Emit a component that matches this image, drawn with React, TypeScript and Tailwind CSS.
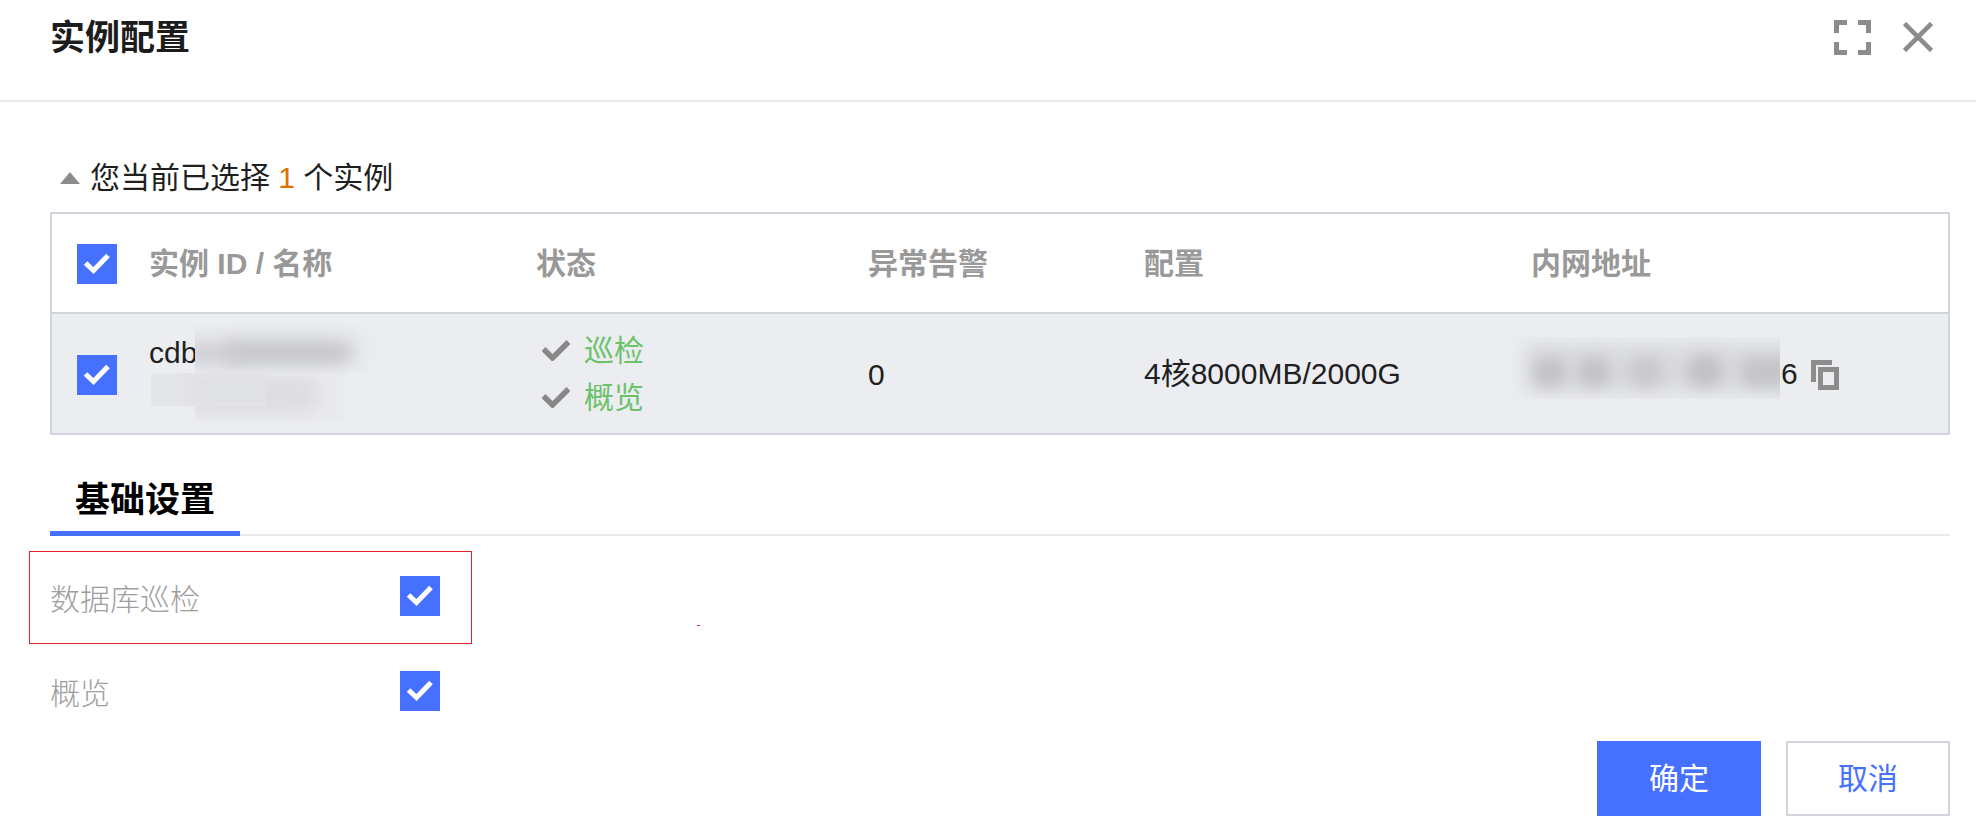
const FONT = "font-['Liberation_Sans','Noto_Sans_CJK_SC',sans-serif]";

function Checkbox() {
  return (
    <span className="block h-10 w-10 shrink-0 bg-[#4670ff]">
      <svg width="40" height="40" viewBox="0 0 40 40" fill="none">
        <path d="M8.5 19 L16.5 26.5 L31 11.5" stroke="#fff" strokeWidth="5" />
      </svg>
    </span>
  );
}

function Tick() {
  return (
    <svg width="28" height="22" viewBox="0 0 28 22" fill="none" className="mr-[14px] shrink-0">
      <path d="M1.5 10 L10.5 19 L26.5 3" stroke="#888888" strokeWidth="5.5" />
    </svg>
  );
}

function Blur({ className, blobs }: { className: string; blobs: string[] }) {
  return (
    <div className={`absolute overflow-hidden ${className}`}>
      {blobs.map((b, i) => (
        <div key={i} className={`absolute ${b}`} />
      ))}
    </div>
  );
}

export default function App() {
  return (
    <div className={`relative h-[830px] w-[1976px] overflow-hidden bg-white text-[30px] text-[#1f1f1f] ${FONT}`}>
      <header className="h-[102px] border-b-2 border-[#e8e9ef]">
        <div className="flex h-[74px] items-center justify-between pl-[50px] pr-[43px]">
          <h1 className="pt-[2px] text-[35px] font-bold leading-10 text-[#1c1c1c]">实例配置</h1>
          <div className="flex items-center gap-[32px]">
            <svg width="37" height="35" viewBox="0 0 37 35" fill="none" stroke="#8c8c8c" strokeWidth="5">
              <path d="M2.5 13 V2.5 H13 M24 2.5 H34.5 V13 M2.5 22 V32.5 H13 M24 32.5 H34.5 V22" />
            </svg>
            <svg width="30" height="30" viewBox="0 0 30 30" fill="none" stroke="#8c8c8c" strokeWidth="4.6">
              <path d="M1.5 1.5 L28.5 28.5 M28.5 1.5 L1.5 28.5" />
            </svg>
          </div>
        </div>
      </header>

      <main className="pl-[50px] pr-[26px]">
        <div className="mb-[14px] box-content flex h-10 items-center pt-[56px]">
          <span className="ml-[10px] mr-[10px] h-0 w-0 border-x-[10px] border-b-[12px] border-x-transparent border-b-[#8c8c8c]" />
          <span className="leading-10">
            您当前已选择 <span className="text-[#e07000]">1</span> 个实例
          </span>
        </div>

        <section className="border-2 border-[#d1d5de]">
          <div className="grid h-[100px] grid-cols-[97px_387px_332px_276px_387px_1fr] items-center border-b-2 border-[#d1d5de] font-bold text-[#999999]">
            <div className="pl-[25px] pt-[2px]"><Checkbox /></div>
            <div>实例 ID / 名称</div>
            <div>状态</div>
            <div>异常告警</div>
            <div>配置</div>
            <div>内网地址</div>
          </div>
          <div className="grid h-[119px] grid-cols-[97px_387px_332px_276px_387px_1fr] items-center bg-[#ebedf1]">
            <div className="pl-[25px] pt-[3px]"><Checkbox /></div>
            <div className="relative h-full">
              <div className="pt-[19px] leading-10">cdb</div>
              <Blur
                className="left-[46px] top-[11px] h-[48px] w-[190px] bg-[#ebedf1]"
                blobs={[
                  "left-[-20px] top-[10px] h-[32px] w-[185px] rounded-full bg-[#dfe0e4] blur-[10px]",
                  "left-[30px] top-[20px] h-[16px] w-[125px] rounded-full bg-[#bcbdc2] blur-[9px]",
                  "left-[-10px] top-[22px] h-[14px] w-[60px] rounded-full bg-[#cbccd1] blur-[8px]",
                ]}
              />
              <Blur
                className="left-[46px] top-[59px] h-[48px] w-[150px] bg-[#e9eaee]"
                blobs={[
                  "left-[-10px] top-[4px] h-[36px] w-[135px] rounded-full bg-[#dcdde1] blur-[8px]",
                ]}
              />
              <Blur
                className="left-[2px] top-[59px] h-[33px] w-[115px] bg-[#e4e5e9]"
                blobs={[
                  "left-[40px] top-[4px] h-[28px] w-[90px] bg-[#dfe0e4] blur-[6px]",
                ]}
              />
            </div>
            <div className="pl-[6px] text-[#6cc26a]">
              <div className="flex h-[47px] items-center"><Tick />巡检</div>
              <div className="flex h-[47px] items-center"><Tick />概览</div>
            </div>
            <div className="pt-[2px]">0</div>
            <div>4核8000MB/2000G</div>
            <div className="relative h-full">
              <div className="flex h-full items-center pl-[250px]">
                <span>6</span>
                <svg width="28" height="30" viewBox="0 0 28 30" className="ml-[13px] mt-[2px]" fill="none" stroke="#8c8c8c">
                  <path d="M2.5 22 V2.5 H21" strokeWidth="5" />
                  <rect x="9.5" y="9.5" width="16" height="18" strokeWidth="5" />
                </svg>
              </div>
              <Blur
                className="left-[-21px] top-[23px] h-[62px] w-[270px] bg-[#ebedf1]"
                blobs={[
                  "left-[15px] top-[6px] h-[50px] w-[290px] bg-[#d9dade] blur-[9px]",
                  "left-[23px] top-[20px] h-[30px] w-[34px] rounded-full bg-[#c2c3c8] blur-[7px]",
                  "left-[67px] top-[20px] h-[30px] w-[34px] rounded-full bg-[#c2c3c8] blur-[7px]",
                  "left-[118px] top-[20px] h-[30px] w-[36px] rounded-full bg-[#c8c9cd] blur-[7px]",
                  "left-[177px] top-[18px] h-[32px] w-[36px] rounded-full bg-[#c0c1c6] blur-[7px]",
                  "left-[230px] top-[20px] h-[30px] w-[60px] rounded-full bg-[#c4c5c9] blur-[7px]",
                ]}
              />
            </div>
          </div>
        </section>

        <div className="mt-[40px] h-[61px] border-b-2 border-[#e8e9ef]">
          <div className="h-[61px] w-[190px] border-b-[5px] border-[#4670ff] text-center text-[35px] font-bold leading-[50px] text-black">
            基础设置
          </div>
        </div>

        <div className="ml-[-21px] mt-[15px] flex h-[93px] w-[443px] items-center justify-between border border-[#e0242c] pl-5 pr-[31px] font-light text-[#9e9e9e]">
          <span className="pt-[3px]">数据库巡检</span>
          <span className="-mt-[3px]"><Checkbox /></span>
        </div>

        <div className="mt-[27px] flex h-10 w-[390px] items-start justify-between font-light text-[#9e9e9e]">
          <span className="leading-[46px]">概览</span>
          <Checkbox />
        </div>

        <div className="mt-[30px] flex justify-end gap-[25px]">
          <button className="h-[75px] w-[164px] bg-[#4670ff] text-white">确定</button>
          <button className="h-[75px] w-[164px] border-2 border-[#d1d5de] bg-white text-[#4670ff]">取消</button>
        </div>
      </main>

      <div className="absolute left-[697px] top-[625px] h-px w-[3px] bg-[#e0242c]" />
    </div>
  );
}
